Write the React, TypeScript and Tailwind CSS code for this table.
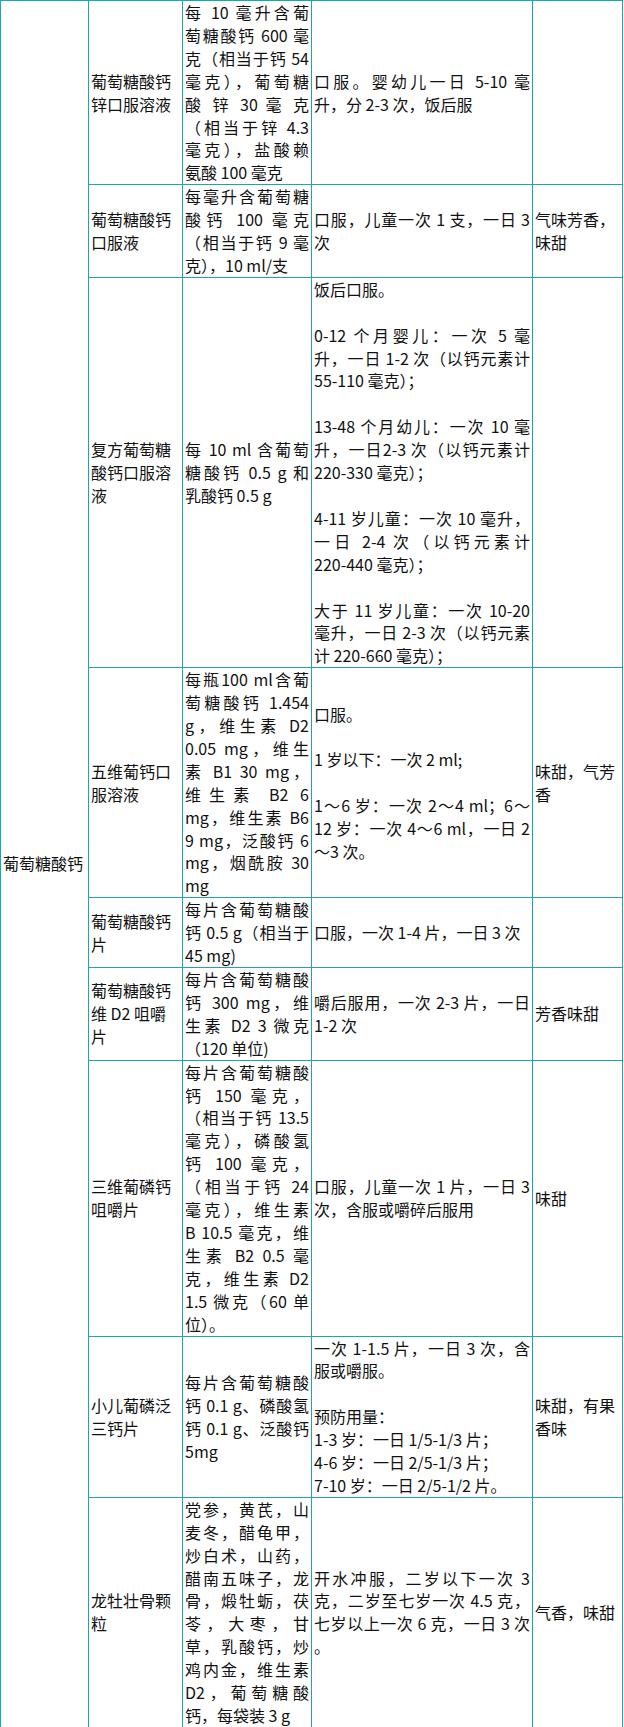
import React from "react";

type Row = { name: string[]; spec: string[]; usage: string[]; taste: string[] };

const rows: Row[] = [
  {
    name: ["葡萄糖酸钙", "锌口服溶液"],
    spec: [
      "^每 10 毫升含葡",
      "^萄糖酸钙 600 毫",
      "^克（相当于钙 54",
      "^毫克），葡萄糖",
      "^酸 锌 30 毫 克",
      "^（相当于锌 4.3",
      "^毫克），盐酸赖",
      "氨酸 100 毫克",
    ],
    usage: ["^口服。婴幼儿一日 5-10 毫", "升，分 2-3 次，饭后服"],
    taste: [],
  },
  {
    name: ["葡萄糖酸钙", "口服液"],
    spec: ["^每毫升含葡萄糖", "^酸钙 100 毫克", "^（相当于钙 9 毫", "克），10 ml/支"],
    usage: ["^口服，儿童一次 1 支，一日 3", "次"],
    taste: ["气味芳香，", "味甜"],
  },
  {
    name: ["复方葡萄糖", "酸钙口服溶", "液"],
    spec: ["^每 10 ml 含葡萄", "^糖酸钙 0.5 g 和", "乳酸钙 0.5 g"],
    usage: [
      "饭后口服。",
      "",
      "^0-12 个月婴儿：一次 5 毫",
      "^升，一日 1-2 次（以钙元素计",
      "55-110 毫克）；",
      "",
      "^13-48 个月幼儿：一次 10 毫",
      "^升，一日2-3 次（以钙元素计",
      "220-330 毫克）；",
      "",
      "^4-11 岁儿童：一次 10 毫升，",
      "^一日 2-4 次（以钙元素计",
      "220-440 毫克）；",
      "",
      "^大于 11 岁儿童：一次 10-20",
      "^毫升，一日 2-3 次（以钙元素",
      "计 220-660 毫克）；",
    ],
    taste: [],
  },
  {
    name: ["五维葡钙口", "服溶液"],
    spec: [
      "^每瓶100 ml含葡",
      "^萄糖酸钙 1.454",
      "^g，维生素 D2",
      "^0.05 mg，维生",
      "^素 B1 30 mg，",
      "^维生素 B2 6",
      "^mg，维生素 B6",
      "^9 mg，泛酸钙 6",
      "^mg，烟酰胺 30",
      "mg",
    ],
    usage: [
      "口服。",
      "",
      "1 岁以下：一次 2 ml;",
      "",
      "^1～6 岁：一次 2～4 ml；6～",
      "^12 岁：一次 4～6 ml，一日 2",
      "～3 次。",
    ],
    taste: ["味甜，气芳", "香"],
  },
  {
    name: ["葡萄糖酸钙", "片"],
    spec: ["^每片含葡萄糖酸", "^钙 0.5 g（相当于", "45 mg)"],
    usage: ["口服，一次 1-4 片，一日 3 次"],
    taste: [],
  },
  {
    name: ["葡萄糖酸钙", "维 D2 咀嚼", "片"],
    spec: ["^每片含葡萄糖酸", "^钙 300 mg，维", "^生素 D2 3 微克", "（120 单位)"],
    usage: ["^嚼后服用，一次 2-3 片，一日", "1-2 次"],
    taste: ["芳香味甜"],
  },
  {
    name: ["三维葡磷钙", "咀嚼片"],
    spec: [
      "^每片含葡萄糖酸",
      "^钙 150 毫克，",
      "^（相当于钙 13.5",
      "^毫克），磷酸氢",
      "^钙 100 毫克，",
      "^（相当于钙 24",
      "^毫克），维生素",
      "^B 10.5 毫克，维",
      "^生素 B2 0.5 毫",
      "^克，维生素 D2",
      "^1.5 微克（60 单",
      "位）。",
    ],
    usage: ["^口服，儿童一次 1 片，一日 3", "次，含服或嚼碎后服用"],
    taste: ["味甜"],
  },
  {
    name: ["小儿葡磷泛", "三钙片"],
    spec: ["^每片含葡萄糖酸", "^钙 0.1 g、磷酸氢", "^钙 0.1 g、泛酸钙", "5mg"],
    usage: [
      "^一次 1-1.5 片，一日 3 次，含",
      "服或嚼服。",
      "",
      "预防用量：",
      "1-3 岁：一日 1/5-1/3 片；",
      "4-6 岁：一日 2/5-1/3 片；",
      "7-10 岁：一日 2/5-1/2 片。",
    ],
    taste: ["味甜，有果", "香味"],
  },
  {
    name: ["龙牡壮骨颗", "粒"],
    spec: [
      "^党参，黄芪，山",
      "^麦冬，醋龟甲，",
      "^炒白术，山药，",
      "^醋南五味子，龙",
      "^骨，煅牡蛎，茯",
      "^苓，大枣，甘",
      "^草，乳酸钙，炒",
      "^鸡内金，维生素",
      "^D2，葡萄糖酸",
      "钙，每袋装 3 g",
    ],
    usage: [
      "^开水冲服，二岁以下一次 3",
      "^克，二岁至七岁一次 4.5 克，",
      "^七岁以上一次 6 克，一日 3 次",
      "。",
    ],
    taste: ["气香，味甜"],
  },
];

function Lines({ lines }: { lines: string[] }) {
  return (
    <>
      {lines.map((l, i) =>
        l === "" ? (
          <div key={i} className="h-[22.9px]" />
        ) : l.startsWith("^") ? (
          <div key={i} className="text-justify [text-align-last:justify]">
            {l.slice(1)}
          </div>
        ) : (
          <div key={i} className="text-left">
            {l}
          </div>
        )
      )}
    </>
  );
}

function Cell({ lines }: { lines: string[] }) {
  return (
    <div className="bg-white px-[2px] flex flex-col justify-center">
      <Lines lines={lines} />
    </div>
  );
}

export default function App() {
  return (
    <div className="w-[624px] bg-white text-[#111] font-['Noto_Sans_CJK_SC','Noto_Sans_CJK_JP',sans-serif] text-[16px] leading-[22.9px]">
      <div className="grid w-[623px] grid-cols-[87px_93px_128px_220px_89px] gap-px p-px bg-[#22a4a5]">
        <div className="row-span-9 bg-white px-[2px] flex flex-col justify-center">
          <div>葡萄糖酸钙</div>
        </div>
        {rows.map((r, i) => (
          <React.Fragment key={i}>
            <Cell lines={r.name} />
            <Cell lines={r.spec} />
            <Cell lines={r.usage} />
            <Cell lines={r.taste} />
          </React.Fragment>
        ))}
      </div>
    </div>
  );
}
